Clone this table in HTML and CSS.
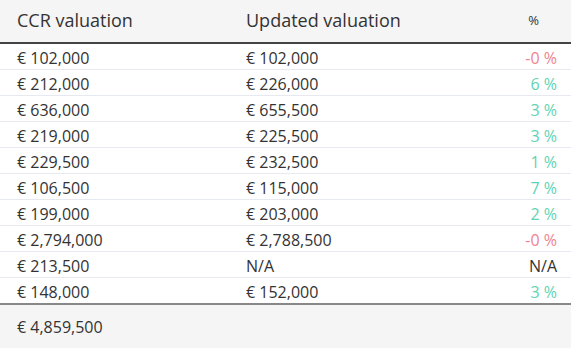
FILE: index.html
```html
<!DOCTYPE html>
<html lang="en">
<head>
    <meta charset="UTF-8" />
    <title>Valuations</title>
    <link rel="stylesheet" href="styles.css">
</head>
<body>
    <table class="valuations">
        <thead>
            <tr>
                <th>CCR valuation</th>
                <th>Updated valuation</th>
                <th class="pct">%</th>
            </tr>
        </thead>
        <tbody>
            <tr><td>€ 102,000</td><td>€ 102,000</td><td class="pct down">-0 %</td></tr>
            <tr><td>€ 212,000</td><td>€ 226,000</td><td class="pct up">6 %</td></tr>
            <tr><td>€ 636,000</td><td>€ 655,500</td><td class="pct up">3 %</td></tr>
            <tr><td>€ 219,000</td><td>€ 225,500</td><td class="pct up">3 %</td></tr>
            <tr><td>€ 229,500</td><td>€ 232,500</td><td class="pct up">1 %</td></tr>
            <tr><td>€ 106,500</td><td>€ 115,000</td><td class="pct up">7 %</td></tr>
            <tr><td>€ 199,000</td><td>€ 203,000</td><td class="pct up">2 %</td></tr>
            <tr><td>€ 2,794,000</td><td>€ 2,788,500</td><td class="pct down">-0 %</td></tr>
            <tr><td>€ 213,500</td><td>N/A</td><td class="pct">N/A</td></tr>
            <tr><td>€ 148,000</td><td>€ 152,000</td><td class="pct up">3 %</td></tr>
        </tbody>
        <tfoot>
            <tr><td>€ 4,859,500</td><td></td><td></td></tr>
        </tfoot>
    </table>
</body>
</html>
```

FILE: styles.css
```css
body {
    margin: 0;
    padding: 0;
    background-color: #ffffff;
    font-family: "Open Sans", sans-serif;
    color: #333333;
}

.valuations {
    width: 100%;
    border-collapse: collapse;
    font-size: 16px;
}

.valuations th,
.valuations td {
    text-align: left;
    padding: 0 0 0 17px;
    line-height: 1;
}

.valuations th:first-child,
.valuations td:first-child {
    width: 212px;
}

.valuations thead th {
    background-color: #f5f5f5;
    font-size: 18px;
    font-weight: 500;
    height: 40px;
    border-bottom: 2px solid #444444;
    vertical-align: middle;
    padding-bottom: 2px;
}

.valuations tbody td {
    height: 23px;
    padding-top: 2px;
    border-bottom: 1px solid #e6e9ef;
}

.valuations tbody tr:last-child td {
    border-bottom: 2px solid #888888;
}

.valuations .pct {
    text-align: right;
    padding-right: 14px;
    width: 60px;
}

.valuations thead .pct {
    font-size: 13px;
    padding-right: 32px;
}

.up {
    color: #5fd3b3;
}

.down {
    color: #f0838f;
}

.valuations tfoot td {
    background-color: #f5f5f5;
    height: 43px;
}
```
